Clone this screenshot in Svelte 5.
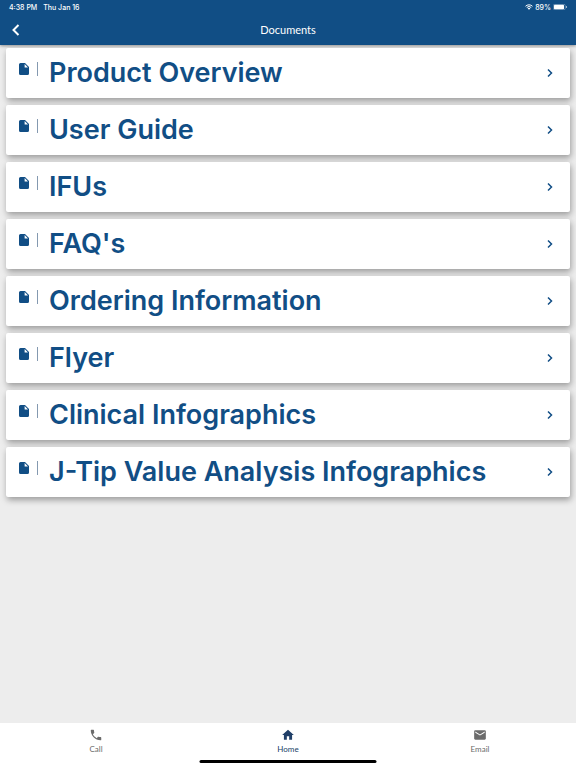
<script>
  const documents = [
    "Product Overview",
    "User Guide",
    "IFUs",
    "FAQ's",
    "Ordering Information",
    "Flyer",
    "Clinical Infographics",
    "J-Tip Value Analysis Infographics",
  ];

  const tabs = [
    {
      label: "Call",
      icon: "M6.62 10.79c1.44 2.83 3.76 5.14 6.59 6.59l2.2-2.2c.27-.27.67-.36 1.02-.24 1.12.37 2.33.57 3.57.57.55 0 1 .45 1 1V20c0 .55-.45 1-1 1-9.39 0-17-7.61-17-17 0-.55.45-1 1-1h3.5c.55 0 1 .45 1 1 0 1.25.2 2.45.57 3.57.11.35.03.74-.25 1.02l-2.2 2.2z",
    },
    { label: "Home", icon: "M10 20v-6h4v6h5v-8h3L12 3 2 12h3v8z", active: true },
    {
      label: "Email",
      icon: "M20 4H4c-1.1 0-2 .9-2 2v12c0 1.1.9 2 2 2h16c1.1 0 2-.9 2-2V6c0-1.1-.9-2-2-2zm0 4l-8 5-8-5V6l8 5 8-5v2z",
    },
  ];
</script>

<div class="screen">
  <header>
    <div class="status">
      <span>4:38 PM</span>
      <span class="date">Thu Jan 16</span>
      <svg class="wifi" viewBox="0 0 16 12" aria-hidden="true">
        <path d="M1 4.5a10 10 0 0 1 14 0M3.5 7a6.5 6.5 0 0 1 9 0" />
        <path class="dot" d="M8 11.5L5.300 8.800a3.800 3.800 0 0 1 5.400 0z" />
      </svg>
      <span>89%</span>
      <svg class="battery" viewBox="0 0 28 12" aria-hidden="true">
        <rect class="shell" x="0.5" y="0.5" width="24" height="11" rx="3" />
        <rect x="2" y="1.5" width="20" height="9" rx="1.5" />
        <path d="M26 4v4c1-.3 1.5-1 1.5-2s-.5-1.7-1.5-2z" />
      </svg>
    </div>
    <div class="navbar">
      <button class="back" aria-label="Back">
        <svg viewBox="0 0 8 12"><path d="M6.5 1L1.5 6l5 5" /></svg>
      </button>
      <h1>Documents</h1>
    </div>
  </header>

  <main>
    {#each documents as name}
      <a class="card" href="#document">
        <svg class="file" viewBox="0 0 10 12" aria-hidden="true">
          <path d="M1.5 0H6l4 4v6.5A1.5 1.5 0 0 1 8.5 12h-7A1.5 1.5 0 0 1 0 10.5v-9A1.5 1.5 0 0 1 1.5 0z" />
          <path class="fold" d="M5.6 1v3.4H9z" />
        </svg>
        <span class="divider"></span>
        <span class="name">{name}</span>
        <svg class="chevron" viewBox="0 0 6 10" aria-hidden="true"><path d="M1 1.5L4.5 5 1 8.5" /></svg>
      </a>
    {/each}
  </main>

  <nav>
    {#each tabs as { label, icon, active }}
      <a class="tab" class:active href="#tab">
        <svg viewBox="0 0 24 24" aria-hidden="true"><path d={icon} /></svg>
        <span>{label}</span>
      </a>
    {/each}
    <div class="home-bar"></div>
  </nav>
</div>

<style>
  :global(body) {
    margin: 0;
    background: #ededed;
  }

  .screen {
    display: flex;
    flex-direction: column;
    min-height: 100vh;
    font-family: Inter, "Liberation Sans", sans-serif;
    background: #ededed;
  }

  header {
    color: white;
    background: #114e85;
    box-shadow: 0 1px 3px rgba(0, 0, 0, 0.4);
  }

  .status {
    display: flex;
    align-items: center;
    height: 14px;
    padding: 0 9px;
    font-size: 7px;
    font-weight: 500;
  }

  .date {
    margin: 0 auto 0 6px;
  }

  .wifi {
    width: 8px;
    height: 6px;
    margin-right: 2px;
    fill: none;
    stroke: white;
    stroke-width: 2;
  }

  .wifi .dot {
    fill: white;
    stroke: none;
  }

  .battery {
    width: 14px;
    height: 6px;
    margin-left: 2px;
    fill: white;
  }

  .battery .shell {
    fill: none;
    stroke: #a0b8ce;
  }

  .navbar {
    display: grid;
    grid-template-columns: 32px 1fr 32px;
    align-items: center;
    height: 31px;
  }

  .back {
    display: flex;
    justify-content: center;
    padding: 0;
    border: none;
    background: none;
  }

  .back svg {
    width: 8px;
    height: 12px;
    fill: none;
    stroke: white;
    stroke-width: 2;
  }

  h1 {
    margin: 0;
    font: 400 11px/16px Lato, sans-serif;
    text-align: center;
  }

  main {
    display: flex;
    flex: 1;
    flex-direction: column;
    gap: 7px;
    padding: 3px 6px;
  }

  .card {
    display: flex;
    align-items: center;
    height: 50px;
    padding: 0 17px 0 13px;
    box-sizing: border-box;
    color: #114e85;
    background: white;
    border-radius: 2px;
    box-shadow: 1px 3px 6px rgba(0, 0, 0, 0.35);
    text-decoration: none;
  }

  .file {
    width: 10px;
    height: 12px;
    margin-bottom: 8px;
    fill: #114e85;
  }

  .file .fold {
    fill: white;
  }

  .divider {
    width: 1px;
    height: 14px;
    margin: 0 11px 8px 8px;
    background: #8499b0;
  }

  .name {
    flex: 1;
    font-size: 27px;
    font-weight: 600;
    line-height: 34px;
  }

  .chevron {
    width: 6px;
    height: 10px;
    fill: none;
    stroke: #114e85;
    stroke-width: 1.5;
  }

  nav {
    position: relative;
    display: grid;
    grid-template-columns: repeat(3, 1fr);
    height: 45px;
    background: white;
  }

  .tab {
    display: flex;
    flex-direction: column;
    align-items: center;
    padding-top: 5px;
    color: #6b6b6b;
    font: 400 8px/14px Lato, sans-serif;
    text-decoration: none;
  }

  .tab.active {
    color: #203f68;
  }

  .tab svg {
    width: 14px;
    height: 14px;
    fill: currentColor;
  }

  .home-bar {
    position: absolute;
    bottom: 5px;
    left: 50%;
    width: 177px;
    height: 3px;
    border-radius: 2px;
    background: black;
    transform: translateX(-50%);
  }
</style>
